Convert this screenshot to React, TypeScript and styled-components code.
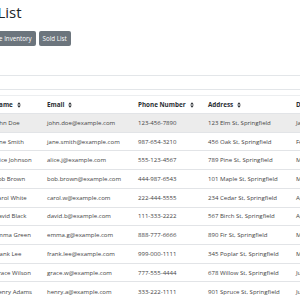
import React from "react";
import styled, { createGlobalStyle } from "styled-components";

const Global = createGlobalStyle`
  html, body { margin: 0; padding: 0; background: #ffffff; overflow: hidden; }
  body { font-family: "Open Sans", "Noto Sans", sans-serif; color: #212529; }
  *, *::before, *::after { box-sizing: border-box; }
`;

const Page = styled.div`
  width: 300px;
  height: 300px;
  overflow: hidden;
  display: flex;
  flex-direction: column;
`;

const Header = styled.header`
  display: flex;
  flex-direction: column;
  margin-left: -22px;
`;

const Title = styled.h2`
  margin: 3px 0 0 -53px;
  font-size: 15px;
  line-height: 18px;
  font-weight: 500;
  color: #212529;
  white-space: nowrap;
`;

const ButtonRow = styled.div`
  display: flex;
  gap: 3px;
  margin-top: 10px;
`;

const Button = styled.button`
  height: 15px;
  padding: 0 4px;
  border: none;
  border-radius: 2px;
  background: #6c757d;
  color: #ffffff;
  font-family: "Open Sans", sans-serif;
  font-size: 6.2px;
  line-height: 15px;
  white-space: nowrap;
`;

const FilterBox = styled.div`
  margin: 29px 0 0 -30px;
  width: 420px;
  height: 15px;
  flex-shrink: 0;
  border-top: 1px solid #e3e6e9;
  border-bottom: 1px solid #e3e6e9;
`;

const Table = styled.table`
  margin: 5px 0 0 -10px;
  border-collapse: collapse;
  table-layout: fixed;
  width: 390px;
  flex-shrink: 0;
  border-top: 1px solid #eceef0;
`;

const Th = styled.th<{ $w: number }>`
  width: ${(p) => p.$w}px;
  height: 18px;
  padding: 0 4px;
  text-align: left;
  font-size: 6.3px;
  font-weight: 700;
  color: #2a2e33;
  white-space: nowrap;
  vertical-align: middle;
`;

const Tr = styled.tr<{ $active?: boolean }>`
  height: 18.73px;
  background: ${(p) => (p.$active ? "#ececec" : "transparent")};
  border-top: 1px solid #e2e4e7;
`;

const Td = styled.td`
  padding: 0 4px;
  font-size: 6.05px;
  color: #444444;
  white-space: nowrap;
  overflow: hidden;
  vertical-align: middle;
`;

const SortWrap = styled.span`
  display: inline-flex;
  align-items: center;
  gap: 4px;
`;

const SortIcon = () => (
  <svg width="4" height="6" viewBox="0 0 4 6" aria-hidden="true">
    <path d="M0.2 2.4 L2 0.3 L3.8 2.4 Z M0.2 3.6 L2 5.7 L3.8 3.6 Z" fill="#2a2e33" />
  </svg>
);

const columns = [
  { label: "Name", w: 53, sort: true },
  { label: "Email", w: 91, sort: true },
  { label: "Phone Number", w: 70, sort: true },
  { label: "Address", w: 88, sort: true },
  { label: "Date Joined", w: 88, sort: false },
];

const rows = [
  ["John Doe", "john.doe@example.com", "123-456-7890", "123 Elm St, Springfield", "Jan 15, 2023"],
  ["Jane Smith", "jane.smith@example.com", "987-654-3210", "456 Oak St, Springfield", "Feb 20, 2023"],
  ["Alice Johnson", "alice.j@example.com", "555-123-4567", "789 Pine St, Springfield", "Mar 05, 2023"],
  ["Bob Brown", "bob.brown@example.com", "444-987-6543", "101 Maple St, Springfield", "Mar 18, 2023"],
  ["Carol White", "carol.w@example.com", "222-444-5555", "234 Cedar St, Springfield", "Apr 02, 2023"],
  ["David Black", "david.b@example.com", "111-333-2222", "567 Birch St, Springfield", "Apr 27, 2023"],
  ["Emma Green", "emma.g@example.com", "888-777-6666", "890 Fir St, Springfield", "May 09, 2023"],
  ["Frank Lee", "frank.lee@example.com", "999-000-1111", "345 Poplar St, Springfield", "May 30, 2023"],
  ["Grace Wilson", "grace.w@example.com", "777-555-4444", "678 Willow St, Springfield", "Jun 11, 2023"],
  ["Henry Adams", "henry.a@example.com", "333-222-1111", "901 Spruce St, Springfield", "Jul 04, 2023"],
];

export default function App() {
  return (
    <>
      <Global />
      <Page>
        <Header>
          <Title>Customer List</Title>
          <ButtonRow>
            <Button>Vehicle Inventory</Button>
            <Button>Sold List</Button>
          </ButtonRow>
        </Header>
        <FilterBox />
        <Table>
          <thead>
            <tr>
              {columns.map((c) => (
                <Th key={c.label} $w={c.w}>
                  {c.sort ? (
                    <SortWrap>
                      {c.label}
                      <SortIcon />
                    </SortWrap>
                  ) : (
                    c.label
                  )}
                </Th>
              ))}
            </tr>
          </thead>
          <tbody>
            {rows.map((r, i) => (
              <Tr key={r[1]} $active={i === 0}>
                {r.map((cell, j) => (
                  <Td key={j}>{cell}</Td>
                ))}
              </Tr>
            ))}
          </tbody>
        </Table>
      </Page>
    </>
  );
}
